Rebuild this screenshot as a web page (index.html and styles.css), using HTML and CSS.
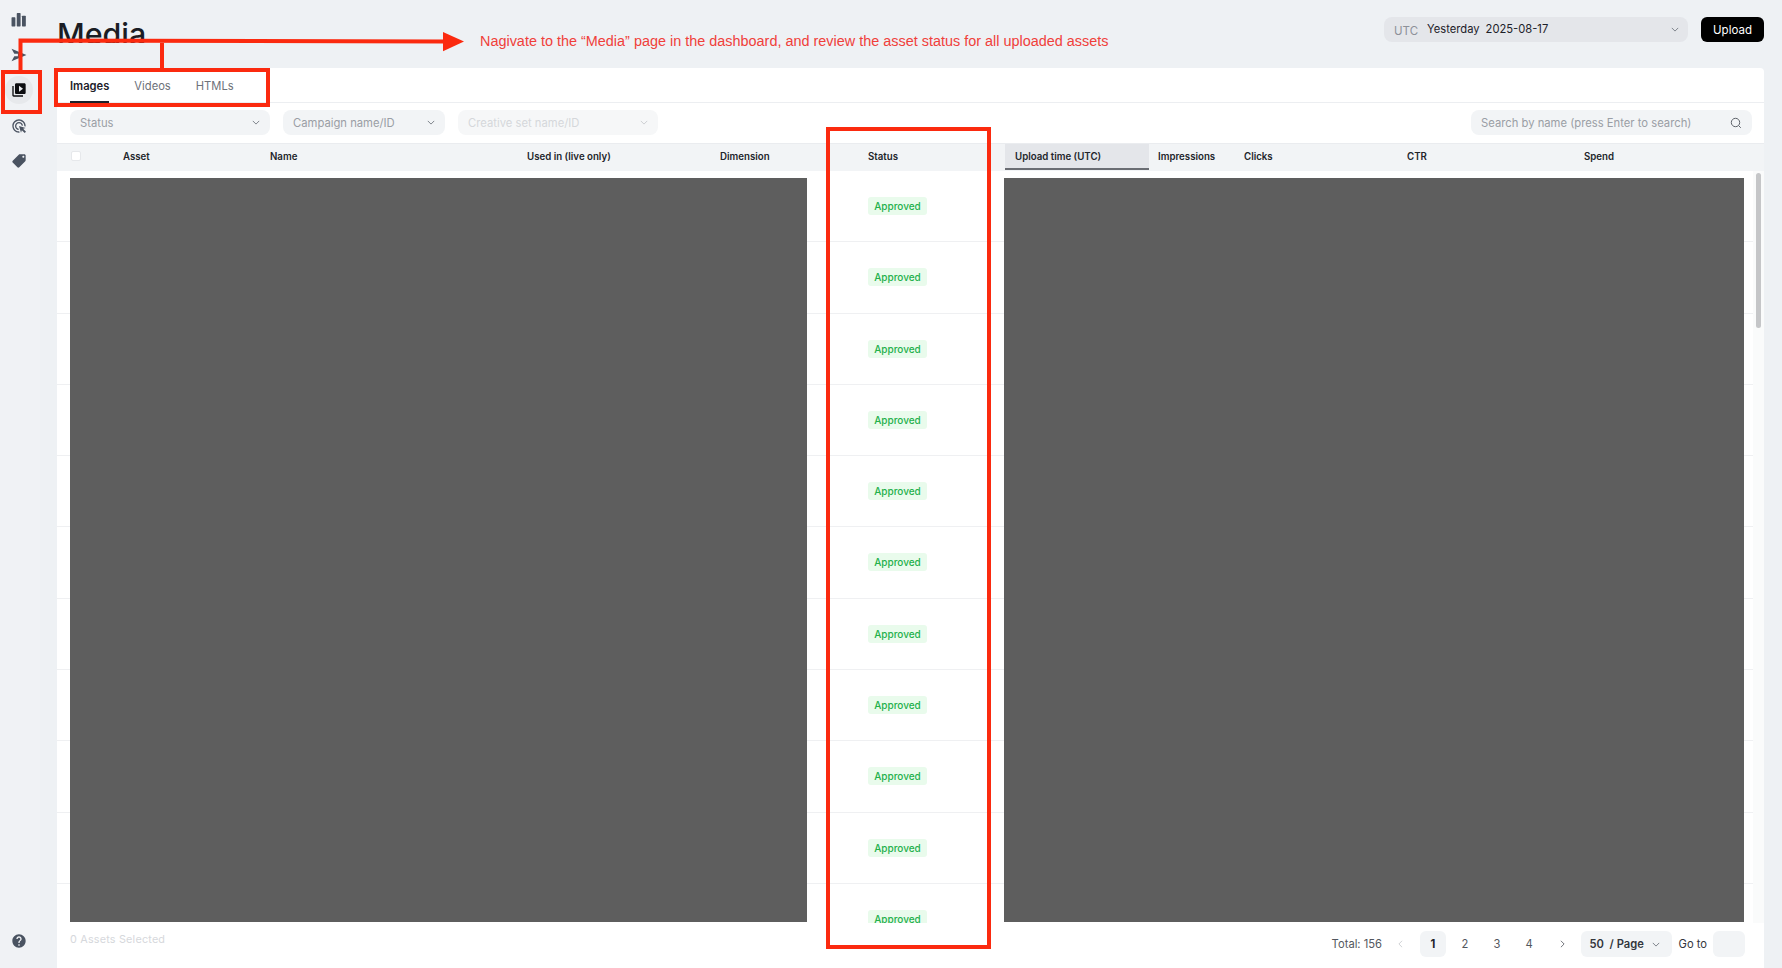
FILE: index.html
```html
<!DOCTYPE html>
<html lang="en">
<head>
<meta charset="utf-8">
<title>Media</title>
<link rel="stylesheet" href="styles.css">
</head>
<body>
<div class="app">
  <aside class="sidebar">
    <nav class="nav">
      <span class="nav-item"><svg class="icon" viewBox="-0.5 -0.5 15 15"><rect x="0" y="4.5" width="3.6" height="8.5" rx=".6"/><rect x="4.9" y="0.5" width="3.6" height="12.5" rx=".6"/><rect x="9.8" y="3" width="3.6" height="10" rx=".6"/></svg></span>
      <span class="nav-item"><svg class="icon" viewBox="-0.5 -0.5 15 15"><path d="M0 1.2 14 7 0 12.8l2.6-4.6H6V5.8H2.6z"/></svg></span>
      <span class="nav-item active"><svg class="icon" viewBox="0 0 24 24"><path d="M4 6H2v14c0 1.1.9 2 2 2h14v-2H4V6z"/><path d="M20 2H8c-1.1 0-2 .9-2 2v12c0 1.1.9 2 2 2h12c1.1 0 2-.9 2-2V4c0-1.1-.9-2-2-2zm-8 12.5v-9l6 4.5-6 4.5z"/></svg></span>
      <span class="nav-item"><svg class="icon" viewBox="0 0 24 24"><path d="M11.71,17.99C8.53,17.84,6,15.22,6,12c0-3.31,2.69-6,6-6c3.22,0,5.84,2.53,5.99,5.71l-2.1-0.63C15.48,9.31,13.89,8,12,8 c-2.21,0-4,1.79-4,4c0,1.89,1.31,3.48,3.08,3.89L11.71,17.99z M22,12c0,0.3-0.01,0.6-0.04,0.9l-1.97-0.59C20,12.21,20,12.1,20,12 c0-4.42-3.58-8-8-8s-8,3.58-8,8s3.58,8,8,8c0.1,0,0.21,0,0.31-0.01l0.59,1.97C12.6,21.99,12.3,22,12,22C6.48,22,2,17.52,2,12 C2,6.48,6.48,2,12,2S22,6.48,22,12z M18.23,16.26L22,15l-10-3l3,10l1.26-3.77l4.27,4.27l1.98-1.98L18.23,16.26z"/></svg></span>
      <span class="nav-item"><svg class="icon" viewBox="0 0 24 24"><path transform="matrix(-1 0 0 1 24 0)" d="M21.41 11.58l-9-9C12.05 2.22 11.55 2 11 2H4c-1.1 0-2 .9-2 2v7c0 .55.22 1.05.59 1.42l9 9c.36.36.86.58 1.41.58s1.05-.22 1.41-.59l7-7c.37-.36.59-.86.59-1.41s-.23-1.06-.59-1.42zM5.5 7C4.67 7 4 6.33 4 5.5S4.67 4 5.5 4 7 4.67 7 5.5 6.33 7 5.5 7z"/></svg></span>
    </nav>
    <span class="nav-item help"><svg class="icon" viewBox="0 0 24 24"><path d="M12 2C6.48 2 2 6.48 2 12s4.48 10 10 10 10-4.48 10-10S17.52 2 12 2zm1 17h-2v-2h2v2zm2.07-7.75l-.9.92C13.45 12.9 13 13.5 13 15h-2v-.5c0-1.1.45-2.1 1.17-2.83l1.24-1.26c.37-.36.59-.86.59-1.41 0-1.1-.9-2-2-2s-2 .9-2 2H8c0-2.21 1.79-4 4-4s4 1.79 4 4c0 .88-.36 1.68-.93 2.25z"/></svg></span>
  </aside>

  <main class="main">
    <header class="topbar">
      <h1 class="title">Media</h1>
      <div class="top-actions">
        <div class="date-select">
          <span class="tz">UTC</span>
          <span class="date-label">Yesterday</span>
          <span class="date-value">2025-08-17</span>
          <svg class="chev chev-end" viewBox="0 0 10 6"><path d="M1 1l4 4 4-4"/></svg>
        </div>
        <button class="upload">Upload</button>
      </div>
    </header>

    <section class="card">
      <div class="tabs">
        <span class="tab tab-active">Images</span>
        <span class="tab">Videos</span>
        <span class="tab">HTMLs</span>
      </div>

      <div class="filters">
        <div class="field field-status"><span>Status</span><svg class="chev" viewBox="0 0 10 6"><path d="M1 1l4 4 4-4"/></svg></div>
        <div class="field field-campaign"><span>Campaign name/ID</span><svg class="chev" viewBox="0 0 10 6"><path d="M1 1l4 4 4-4"/></svg></div>
        <div class="field field-creative"><span>Creative set name/ID</span><svg class="chev" viewBox="0 0 10 6"><path d="M1 1l4 4 4-4"/></svg></div>
        <div class="field field-search"><span>Search by name (press Enter to search)</span><svg class="search-icon" viewBox="0 0 12 12"><circle cx="5.5" cy="5.5" r="4.2"/><path d="M8.6 8.6 10.8 10.8"/></svg></div>
      </div>

      <div class="thead grid">
        <div class="th th-check"><span class="checkbox"></span></div>
        <div class="th">Asset</div>
        <div class="th">Name</div>
        <div class="th">Used in (live only)</div>
        <div class="th">Dimension</div>
        <div class="th">Status</div>
        <div class="th th-sorted">Upload time (UTC)</div>
        <div class="th">Impressions</div>
        <div class="th">Clicks</div>
        <div class="th">CTR</div>
        <div class="th">Spend</div>
      </div>

      <div class="tbody">
        <div class="rows">
          <div class="row grid"><div class="td-status"><span class="badge">Approved</span></div></div>
          <div class="row grid"><div class="td-status"><span class="badge">Approved</span></div></div>
          <div class="row grid"><div class="td-status"><span class="badge">Approved</span></div></div>
          <div class="row grid"><div class="td-status"><span class="badge">Approved</span></div></div>
          <div class="row grid"><div class="td-status"><span class="badge">Approved</span></div></div>
          <div class="row grid"><div class="td-status"><span class="badge">Approved</span></div></div>
          <div class="row grid"><div class="td-status"><span class="badge">Approved</span></div></div>
          <div class="row grid"><div class="td-status"><span class="badge">Approved</span></div></div>
          <div class="row grid"><div class="td-status"><span class="badge">Approved</span></div></div>
          <div class="row grid"><div class="td-status"><span class="badge">Approved</span></div></div>
          <div class="row grid"><div class="td-status"><span class="badge">Approved</span></div></div>
        </div>
        <div class="scrollbar"><span class="thumb"></span></div>
        <div class="redact redact-left"></div>
        <div class="redact redact-right"></div>
      </div>

      <footer class="tfoot">
        <span class="selected">0 Assets Selected</span>
        <div class="pager">
          <span class="total">Total: 156</span>
          <svg class="arrow arrow-off" viewBox="0 0 6 10"><path d="M5 1 1 5l4 4"/></svg>
          <span class="page page-on">1</span>
          <span class="page">2</span>
          <span class="page">3</span>
          <span class="page">4</span>
          <svg class="arrow" viewBox="0 0 6 10"><path d="M1 1l4 4-4 4"/></svg>
          <div class="per-page"><span>50&nbsp; / Page</span><svg class="chev" viewBox="0 0 10 6"><path d="M1 1l4 4 4-4"/></svg></div>
          <span class="goto">Go to</span>
          <span class="goto-input"></span>
        </div>
      </footer>
    </section>
  </main>
</div>

<svg class="marks" viewBox="0 0 1782 968" aria-hidden="true">
  <path class="mark" d="M20.5 72V40.5L445 41.5M162 40.8V69"/>
  <path class="mark-fill" d="M443 32l21 9.6-21 9.6z"/>
  <rect class="mark" x="3" y="72" width="37" height="40"/>
  <rect class="mark" x="56" y="70" width="212" height="35"/>
  <rect class="mark" x="828" y="129" width="161" height="818"/>
</svg>
<p class="note">Nagivate to the “Media” page in the dashboard, and review the asset status for all uploaded assets</p>
</body>
</html>
```

FILE: styles.css
```css
* { box-sizing: border-box; }
html, body { margin: 0; height: 100%; }
body {
  position: relative;
  width: 1782px;
  height: 968px;
  overflow: hidden;
  background: #eef1f4;
  color: #1d2129;
  font-family: Inter, "Liberation Sans", sans-serif;
}
.app { display: flex; height: 968px; }

/* sidebar */
.sidebar {
  flex: 0 0 40px;
  margin-right: 17px;
  display: flex;
  flex-direction: column;
  justify-content: space-between;
  align-items: center;
  padding: 6px 0 13px;
  background: #f0f2f5;
}
.nav { display: flex; flex-direction: column; gap: 7.2px; }
.nav-item {
  width: 28px;
  height: 28px;
  margin-left: -3px;
  border-radius: 50%;
  display: flex;
  align-items: center;
  justify-content: center;
  color: #4a5361;
}
.nav-item.active { background: #e7e9ec; color: #0c0d10; }
.icon { width: 16px; height: 16px; fill: currentColor; }
.help { margin-top: auto; }

/* main */
.main { flex: 1; min-width: 0; display: flex; flex-direction: column; padding-right: 18px; }
.topbar { height: 68px; flex: none; display: flex; justify-content: space-between; }
.title {
  margin: 17px 0 0 0;
  height: 26px;
  overflow: hidden;
  font-size: 30.4px;
  line-height: 34px;
  font-weight: 500;
  color: #1a1d24;
}
.top-actions { display: flex; gap: 13px; padding-top: 17px; height: 42px; box-sizing: content-box; }
.date-select {
  width: 304px;
  height: 25px;
  padding: 0 9px 0 10px;
  display: flex;
  align-items: center;
  background: #e4e6ea;
  border-radius: 8px;
  font-size: 11.2px;
  color: #1d2129;
}
.tz { color: #8d9199; font-size: 11.5px; margin-right: 9px; padding-top: 2px; }
.date-label { margin-right: 6px; padding-bottom: 2px; }
.date-value { padding-bottom: 2px; }
.chev { width: 8px; height: 5px; fill: none; stroke: #7a7f88; stroke-width: 1.2; flex: none; }
.chev-end { margin-left: auto; }
.upload {
  width: 63px;
  height: 25px;
  padding: 0;
  border: 0;
  border-radius: 6px;
  background: #000;
  color: #fff;
  font: 11.5px Inter, "Liberation Sans", sans-serif;
}

/* card */
.card {
  flex: 1;
  min-height: 0;
  display: flex;
  flex-direction: column;
  background: #fff;
  border-radius: 4px 4px 0 0;
}
.tabs {
  height: 35px;
  flex: none;
  display: flex;
  gap: 25px;
  padding-left: 13px;
  border-bottom: 1px solid #eceef1;
}
.tab {
  height: 35px;
  padding-top: 11px;
  font-size: 11.2px;
  line-height: 15px;
  color: #6d7179;
}
.tab-active { color: #1d2129; font-weight: 600; border-bottom: 2px solid #1d2129; }

.filters {
  height: 40px;
  flex: none;
  display: flex;
  gap: 13px;
  padding: 7px 12px 0 13px;
}
.field {
  height: 25px;
  display: flex;
  align-items: center;
  justify-content: space-between;
  padding: 0 10px;
  background: #f2f4f6;
  border-radius: 8px;
  font-size: 11.25px;
  color: #9a9ea5;
}
.field-status { width: 200px; }
.field-campaign { width: 162px; }
.field-creative { width: 200px; color: #d5d7db; background: #f6f7f8; }
.field-creative .chev { stroke: #ccced2; }
.field-search { width: 281px; margin-left: auto; }
.search-icon { width: 12px; height: 12px; fill: none; stroke: #5e636b; stroke-width: 1; }

/* table */
.grid {
  display: grid;
  grid-template-columns: 57px 147px 257px 193px 148px 146px 144px 86px 163px 177px 1fr;
}
.thead {
  height: 28px;
  flex: none;
  background: #f2f4f6;
  border-top: 1px solid #eaecef;
  font-size: 9.7px;
  font-weight: 600;
  color: #22252b;
}
.th { padding-left: 9px; line-height: 25px; white-space: nowrap; }
.th-check { padding: 7px 0 0 14px; }
.checkbox { display: block; width: 10px; height: 10px; background: #fff; border: 1px solid #e6e8eb; border-radius: 2px; }
.th-sorted { height: 26px; padding-left: 10px; background: #e4e6ea; border-bottom: 2px solid #6a6d73; }

.tbody { position: relative; flex: none; height: 752px; display: flex; overflow: hidden; }
.rows { flex: 1; min-width: 0; }
.row { height: 71.3px; border-bottom: 1px solid #eff0f2; }
.td-status { grid-column: 6; padding: 23px 0 0 9px; }
.badge {
  display: inline-block;
  width: 59px;
  height: 18px;
  text-align: center;
  line-height: 18px;
  font-size: 10px;
  font-weight: 500;
  color: #23b04b;
  background: #e9fbec;
  border-radius: 3px;
}
.scrollbar { flex: 0 0 11px; padding: 2px 3px 0; background: #fafbfb; }
.thumb { display: block; height: 155px; background: #c5c6c8; border-radius: 3px; }
.redact { position: absolute; top: 6.5px; bottom: 1px; background: #5e5e5e; }
.redact-left { left: 13px; width: 737px; }
.redact-right { left: 947px; width: 740px; }

/* footer */
.tfoot {
  flex: 1;
  display: flex;
  justify-content: space-between;
  padding: 8px 19px 0 13px;
}
.selected { font-size: 10.8px; line-height: 18px; color: #d6d8dc; letter-spacing: .2px; }
.pager { display: flex; height: 26px; align-items: center; font-size: 11.2px; color: #53575e; }
.total { margin-right: 16px; }
.arrow { width: 5px; height: 8px; fill: none; stroke: #53575e; stroke-width: 1; flex: none; margin-right: 17px; }
.arrow-off { stroke: #c4c6ca; }
.page { width: 26px; height: 26px; margin-right: 6px; border-radius: 6px; line-height: 26px; text-align: center; }
.page-on { background: #f2f4f6; color: #1d2129; font-weight: 700; }
.page + .arrow { margin: 0 15.5px 0 12px; }
.per-page {
  width: 91px;
  height: 26px;
  padding: 0 12px 0 9px;
  display: flex;
  align-items: center;
  justify-content: space-between;
  background: #f2f4f6;
  border-radius: 6px;
  font-weight: 600;
  color: #33363c;
}
.goto { margin: 0 6px 0 7px; color: #33363c; }
.goto-input { width: 32px; height: 26px; background: #f2f4f6; border-radius: 6px; }

/* annotations drawn over the screenshot */
.marks { position: absolute; left: 0; top: 0; width: 1782px; height: 968px; pointer-events: none; }
.mark { fill: none; stroke: #fb2a0f; stroke-width: 4; }
.mark-fill { fill: #fb2a0f; }
.note {
  position: absolute;
  left: 480px;
  top: 32px;
  margin: 0;
  font: 14.43px/18px "Liberation Sans", Arial, sans-serif;
  color: #f0403a;
  white-space: nowrap;
}
```
